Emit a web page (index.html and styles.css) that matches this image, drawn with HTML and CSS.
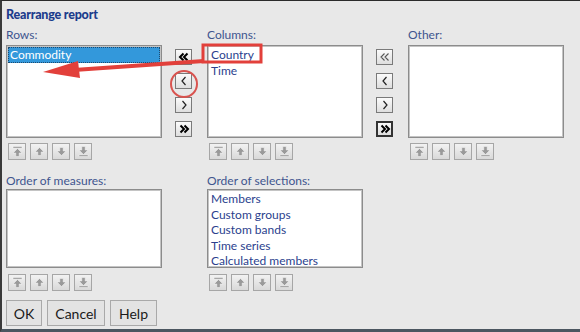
FILE: index.html
```html
<!DOCTYPE html>
<html lang="en">
<head>
    <meta charset="UTF-8">
    <title>Rearrange report</title>
    <link rel="stylesheet" href="styles.css">
</head>
<body>

<div class="dialog">
    <h1 class="title">Rearrange report</h1>

    <div class="row">
        <div class="panel">
            <div class="label">Rows:</div>
            <div class="list list-top">
                <div class="item selected">Commodity</div>
            </div>
            <div class="order">
                <button class="ord"><svg viewBox="0 0 11 11"><rect x="1" y="0.5" width="9" height="1.6"/><polygon points="5.5,2.5 10,7 7.2,7 7.2,10.5 3.8,10.5 3.8,7 1,7"/></svg></button>
                <button class="ord"><svg viewBox="0 0 11 11"><polygon points="5.5,1.5 10,6 7.2,6 7.2,9.5 3.8,9.5 3.8,6 1,6"/></svg></button>
                <button class="ord"><svg viewBox="0 0 11 11"><polygon points="5.5,9.5 10,5 7.2,5 7.2,1.5 3.8,1.5 3.8,5 1,5"/></svg></button>
                <button class="ord"><svg viewBox="0 0 11 11"><polygon points="5.5,8.5 10,4 7.2,4 7.2,0.5 3.8,0.5 3.8,4 1,4"/><rect x="1" y="8.9" width="9" height="1.6"/></svg></button>
            </div>
        </div>

        <div class="movers">
            <button class="mv strong"><svg viewBox="0 0 12 12"><path d="M5.5 2.5 L2 6 L5.5 9.5 M9.5 2.5 L6 6 L9.5 9.5"/></svg></button>
            <button class="mv"><svg viewBox="0 0 12 12"><path d="M7.5 2 L4 6 L7.5 10"/></svg></button>
            <button class="mv"><svg viewBox="0 0 12 12"><path d="M4.5 2 L8 6 L4.5 10"/></svg></button>
            <button class="mv strong"><svg viewBox="0 0 12 12"><path d="M2.5 2.5 L6 6 L2.5 9.5 M6.5 2.5 L10 6 L6.5 9.5"/></svg></button>
        </div>

        <div class="panel">
            <div class="label">Columns:</div>
            <div class="list list-top">
                <div class="item">Country</div>
                <div class="item">Time</div>
            </div>
            <div class="order">
                <button class="ord"><svg viewBox="0 0 11 11"><rect x="1" y="0.5" width="9" height="1.6"/><polygon points="5.5,2.5 10,7 7.2,7 7.2,10.5 3.8,10.5 3.8,7 1,7"/></svg></button>
                <button class="ord"><svg viewBox="0 0 11 11"><polygon points="5.5,1.5 10,6 7.2,6 7.2,9.5 3.8,9.5 3.8,6 1,6"/></svg></button>
                <button class="ord"><svg viewBox="0 0 11 11"><polygon points="5.5,9.5 10,5 7.2,5 7.2,1.5 3.8,1.5 3.8,5 1,5"/></svg></button>
                <button class="ord"><svg viewBox="0 0 11 11"><polygon points="5.5,8.5 10,4 7.2,4 7.2,0.5 3.8,0.5 3.8,4 1,4"/><rect x="1" y="8.9" width="9" height="1.6"/></svg></button>
            </div>
        </div>

        <div class="movers">
            <button class="mv faint"><svg viewBox="0 0 12 12"><path d="M5.5 2.5 L2 6 L5.5 9.5 M9.5 2.5 L6 6 L9.5 9.5"/></svg></button>
            <button class="mv"><svg viewBox="0 0 12 12"><path d="M7.5 2 L4 6 L7.5 10"/></svg></button>
            <button class="mv"><svg viewBox="0 0 12 12"><path d="M4.5 2 L8 6 L4.5 10"/></svg></button>
            <button class="mv strong focused"><svg viewBox="0 0 12 12"><path d="M2.5 2.5 L6 6 L2.5 9.5 M6.5 2.5 L10 6 L6.5 9.5"/></svg></button>
        </div>

        <div class="panel">
            <div class="label">Other:</div>
            <div class="list list-top"></div>
            <div class="order">
                <button class="ord"><svg viewBox="0 0 11 11"><rect x="1" y="0.5" width="9" height="1.6"/><polygon points="5.5,2.5 10,7 7.2,7 7.2,10.5 3.8,10.5 3.8,7 1,7"/></svg></button>
                <button class="ord"><svg viewBox="0 0 11 11"><polygon points="5.5,1.5 10,6 7.2,6 7.2,9.5 3.8,9.5 3.8,6 1,6"/></svg></button>
                <button class="ord"><svg viewBox="0 0 11 11"><polygon points="5.5,9.5 10,5 7.2,5 7.2,1.5 3.8,1.5 3.8,5 1,5"/></svg></button>
                <button class="ord"><svg viewBox="0 0 11 11"><polygon points="5.5,8.5 10,4 7.2,4 7.2,0.5 3.8,0.5 3.8,4 1,4"/><rect x="1" y="8.9" width="9" height="1.6"/></svg></button>
            </div>
        </div>
    </div>

    <div class="row row-bottom">
        <div class="panel">
            <div class="label">Order of measures:</div>
            <div class="list list-low"></div>
            <div class="order">
                <button class="ord"><svg viewBox="0 0 11 11"><rect x="1" y="0.5" width="9" height="1.6"/><polygon points="5.5,2.5 10,7 7.2,7 7.2,10.5 3.8,10.5 3.8,7 1,7"/></svg></button>
                <button class="ord"><svg viewBox="0 0 11 11"><polygon points="5.5,1.5 10,6 7.2,6 7.2,9.5 3.8,9.5 3.8,6 1,6"/></svg></button>
                <button class="ord"><svg viewBox="0 0 11 11"><polygon points="5.5,9.5 10,5 7.2,5 7.2,1.5 3.8,1.5 3.8,5 1,5"/></svg></button>
                <button class="ord"><svg viewBox="0 0 11 11"><polygon points="5.5,8.5 10,4 7.2,4 7.2,0.5 3.8,0.5 3.8,4 1,4"/><rect x="1" y="8.9" width="9" height="1.6"/></svg></button>
            </div>
        </div>

        <div class="spacer"></div>

        <div class="panel">
            <div class="label">Order of selections:</div>
            <div class="list list-low">
                <div class="item">Members</div>
                <div class="item">Custom groups</div>
                <div class="item">Custom bands</div>
                <div class="item">Time series</div>
                <div class="item">Calculated members</div>
            </div>
            <div class="order">
                <button class="ord"><svg viewBox="0 0 11 11"><rect x="1" y="0.5" width="9" height="1.6"/><polygon points="5.5,2.5 10,7 7.2,7 7.2,10.5 3.8,10.5 3.8,7 1,7"/></svg></button>
                <button class="ord"><svg viewBox="0 0 11 11"><polygon points="5.5,1.5 10,6 7.2,6 7.2,9.5 3.8,9.5 3.8,6 1,6"/></svg></button>
                <button class="ord"><svg viewBox="0 0 11 11"><polygon points="5.5,9.5 10,5 7.2,5 7.2,1.5 3.8,1.5 3.8,5 1,5"/></svg></button>
                <button class="ord"><svg viewBox="0 0 11 11"><polygon points="5.5,8.5 10,4 7.2,4 7.2,0.5 3.8,0.5 3.8,4 1,4"/><rect x="1" y="8.9" width="9" height="1.6"/></svg></button>
            </div>
        </div>
    </div>

    <div class="actions">
        <button class="btn btn-ok">OK</button>
        <button class="btn btn-cancel">Cancel</button>
        <button class="btn btn-help">Help</button>
    </div>

    <!-- red annotation drawn on top of the screenshot -->
    <svg class="notes" viewBox="0 0 580 332">
        <rect x="203" y="45" width="58" height="17" fill="none" stroke="#e2403b" stroke-width="3"/>
        <line x1="204" y1="61" x2="74" y2="70" stroke="#e2403b" stroke-width="4"/>
        <polygon points="43,72 78,61 80,78" fill="#e2403b"/>
        <ellipse cx="184" cy="84" rx="13" ry="13" fill="none" stroke="#d9534f" stroke-width="2"/>
    </svg>
</div>

</body>
</html>
```

FILE: styles.css
```css
body {
    margin: 0;
    background-color: #e8e8e8;
    font-family: Lato, 'Noto Sans', sans-serif;
}
.dialog {
    position: relative;
    box-sizing: border-box;
    width: 580px;
    height: 332px;
    padding-left: 4px;
    background-color: #e8e8e8;
    border-top: 1px solid #2b2b2b;
    border-left: 2px solid #3a3a3a;
    border-bottom: 3px solid #4b5660;
}
.title {
    margin: 0;
    padding-top: 6px;
    font-size: 12.5px;
    line-height: 16px;
    font-weight: 900;
    letter-spacing: -0.2px;
    color: #1c3c8c;
}
.row {
    display: flex;
}
.panel {
    width: 156px;
}
.label {
    margin-top: 5px;
    margin-bottom: 3px;
    font-size: 12px;
    line-height: 14px;
    color: #40558f;
}
.list {
    box-sizing: border-box;
    background-color: white;
    border: 1px solid #8c8c8c;
    box-shadow: inset 0 0 0 1px #c4c4c4;
    padding: 1px;
}
.list-top {
    height: 93px;
}
.list-low {
    height: 79px;
}
.item {
    padding-left: 2px;
    font-size: 12px;
    line-height: 15.5px;
    color: #2b3f8e;
    white-space: nowrap;
}
.item.selected {
    background-color: #3398db;
    color: white;
    outline: 1px dotted #1d4a70;
    outline-offset: -1px;
}
.order {
    display: flex;
    gap: 4px;
    margin-top: 5px;
    padding-left: 2px;
}
.row-bottom .order {
    margin-top: 6px;
}
.ord {
    width: 18px;
    height: 17px;
    padding: 0;
    display: flex;
    align-items: center;
    justify-content: center;
    background: linear-gradient(#f2f2f2, #d9d9d9);
    border: 1px solid #a6a6a6;
}
.ord svg {
    width: 11px;
    height: 11px;
    fill: #9a9a9a;
    stroke: #f6f6f6;
    stroke-width: 0.5;
}
.movers {
    width: 45px;
    box-sizing: border-box;
    padding: 26px 0 0 13px;
    display: flex;
    flex-direction: column;
    gap: 8px;
}
.mv {
    width: 17px;
    height: 16px;
    padding: 0;
    display: flex;
    align-items: center;
    justify-content: center;
    background: linear-gradient(#fbfbfb, #dedede);
    border: 1px solid #7a7a7a;
}
.mv svg {
    width: 12px;
    height: 12px;
    fill: none;
    stroke: #222;
    stroke-width: 1.2;
}
.mv.strong svg {
    stroke: #000;
    stroke-width: 2;
}
.mv.faint svg {
    stroke: #555;
    stroke-width: 1.1;
}
.mv.focused {
    border: 2px solid #333;
}
.spacer {
    width: 45px;
}
.row-bottom .label {
    margin-top: 14px;
    margin-bottom: 1px;
}
.actions {
    display: flex;
    gap: 5px;
    margin-top: 9px;
}
.btn {
    height: 26px;
    padding: 0;
    font-family: Lato, 'Noto Sans', sans-serif;
    font-size: 14px;
    color: #1a1a1a;
    background-color: #e3e3e3;
    border: 1px solid #a9a9a9;
}
.btn-ok {
    width: 36px;
}
.btn-cancel {
    width: 58px;
}
.btn-help {
    width: 47px;
}
.notes {
    position: absolute;
    top: -1px;
    left: -2px;
    width: 580px;
    height: 332px;
    pointer-events: none;
}
```
